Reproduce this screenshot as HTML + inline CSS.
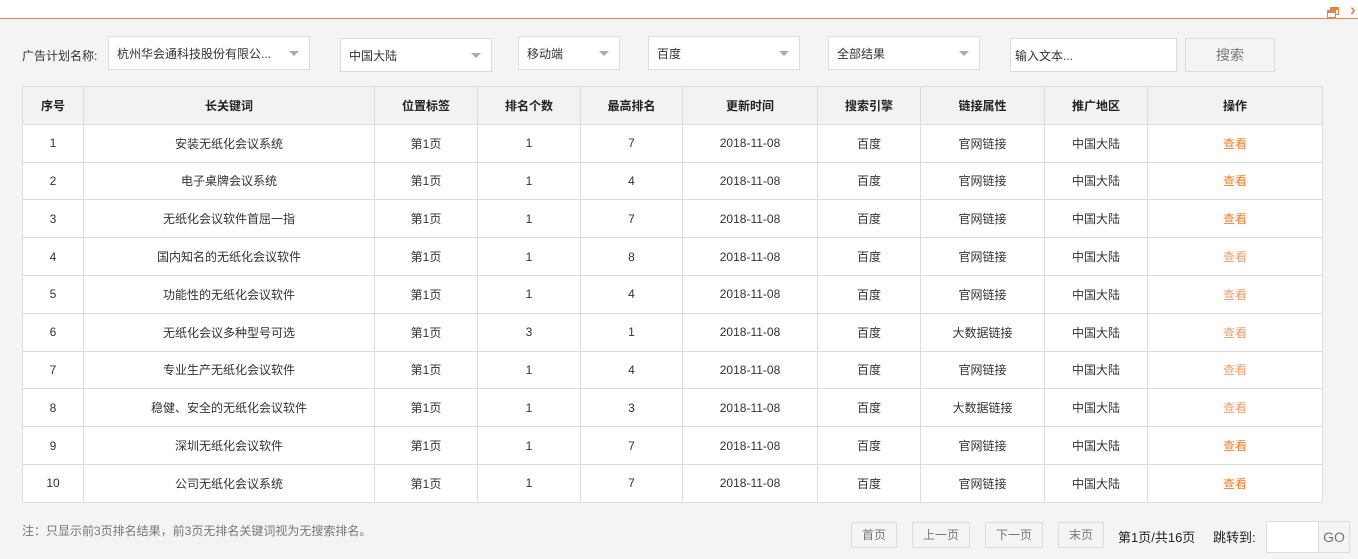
<!DOCTYPE html>
<html><head><meta charset="utf-8"><style>
*{box-sizing:border-box;margin:0;padding:0}
body{width:1358px;height:559px;background:#f4f4f4;font-family:"Liberation Sans","Noto Sans CJK SC",sans-serif;font-size:12px;color:#333;position:relative;overflow:hidden}
.top{position:absolute;left:0;top:0;width:1358px;height:19px;background:#fff;border-bottom:1px solid #e8834a}
.abs{position:absolute}
.sel,.inp{position:absolute;background:#fff;border:1px solid #ddd;height:34px;line-height:34px;padding-left:8px;color:#333}
.sel:after{content:"";position:absolute;right:10px;top:14px;border-left:5px solid transparent;border-right:5px solid transparent;border-top:5px solid #aaa}
table{position:absolute;left:22px;top:86px;border-collapse:collapse;background:#fff}
td,th{border:1px solid #ddd;text-align:center;height:37.8px;font-size:12px;color:#333;padding:0}
th{background:#f2f2f2;font-weight:bold;color:#222}
.o{color:#f07f2f}.o2{color:#e9a072}
.pb{position:absolute;top:522px;height:26px;border:1px solid #ddd;line-height:24px;text-align:center;color:#777;background:#f4f4f4}
</style></head><body>
<div class="top"></div>
<div class="abs" style="left:1330px;top:7px;width:9px;height:8px;border:1.5px solid #e8834a;border-top-width:3px"></div>
<div class="abs" style="left:1327px;top:10px;width:9px;height:8px;border:1.5px solid #e8834a;border-top-width:3px;background:#fff"></div>
<div class="abs" style="left:1350px;top:0px;color:#e8834a;font-size:17px;font-weight:bold">›</div>
<div class="abs" style="left:22px;top:47px;color:#333">广告计划名称:</div>
<div class="sel" style="left:108px;top:36px;width:202px">杭州华会通科技股份有限公...</div>
<div class="sel" style="left:340px;top:38px;width:152px">中国大陆</div>
<div class="sel" style="left:518px;top:36px;width:102px">移动端</div>
<div class="sel" style="left:648px;top:36px;width:152px">百度</div>
<div class="sel" style="left:828px;top:36px;width:152px">全部结果</div>
<div class="inp" style="left:1010px;top:38px;width:167px;padding-left:4px">输入文本...</div>
<div class="abs" style="left:1185px;top:38px;width:90px;height:34px;border:1px solid #ddd;line-height:32px;text-align:center;font-size:14px;color:#777;background:#f4f4f4">搜索</div>
<table>
<colgroup><col style="width:61px"><col style="width:291px"><col style="width:103px"><col style="width:103px"><col style="width:102px"><col style="width:135px"><col style="width:103px"><col style="width:124px"><col style="width:103px"><col style="width:175px"></colgroup>
<tr><th>序号</th><th>长关键词</th><th>位置标签</th><th>排名个数</th><th>最高排名</th><th>更新时间</th><th>搜索引擎</th><th>链接属性</th><th>推广地区</th><th>操作</th></tr>
<tr><td>1</td><td>安装无纸化会议系统</td><td>第1页</td><td>1</td><td>7</td><td>2018-11-08</td><td>百度</td><td>官网链接</td><td>中国大陆</td><td class="o">查看</td></tr>
<tr><td>2</td><td>电子桌牌会议系统</td><td>第1页</td><td>1</td><td>4</td><td>2018-11-08</td><td>百度</td><td>官网链接</td><td>中国大陆</td><td class="o">查看</td></tr>
<tr><td>3</td><td>无纸化会议软件首屈一指</td><td>第1页</td><td>1</td><td>7</td><td>2018-11-08</td><td>百度</td><td>官网链接</td><td>中国大陆</td><td class="o">查看</td></tr>
<tr><td>4</td><td>国内知名的无纸化会议软件</td><td>第1页</td><td>1</td><td>8</td><td>2018-11-08</td><td>百度</td><td>官网链接</td><td>中国大陆</td><td class="o2">查看</td></tr>
<tr><td>5</td><td>功能性的无纸化会议软件</td><td>第1页</td><td>1</td><td>4</td><td>2018-11-08</td><td>百度</td><td>官网链接</td><td>中国大陆</td><td class="o2">查看</td></tr>
<tr><td>6</td><td>无纸化会议多种型号可选</td><td>第1页</td><td>3</td><td>1</td><td>2018-11-08</td><td>百度</td><td>大数据链接</td><td>中国大陆</td><td class="o2">查看</td></tr>
<tr><td>7</td><td>专业生产无纸化会议软件</td><td>第1页</td><td>1</td><td>4</td><td>2018-11-08</td><td>百度</td><td>官网链接</td><td>中国大陆</td><td class="o2">查看</td></tr>
<tr><td>8</td><td>稳健、安全的无纸化会议软件</td><td>第1页</td><td>1</td><td>3</td><td>2018-11-08</td><td>百度</td><td>大数据链接</td><td>中国大陆</td><td class="o2">查看</td></tr>
<tr><td>9</td><td>深圳无纸化会议软件</td><td>第1页</td><td>1</td><td>7</td><td>2018-11-08</td><td>百度</td><td>官网链接</td><td>中国大陆</td><td class="o">查看</td></tr>
<tr><td>10</td><td>公司无纸化会议系统</td><td>第1页</td><td>1</td><td>7</td><td>2018-11-08</td><td>百度</td><td>官网链接</td><td>中国大陆</td><td class="o">查看</td></tr>
</table>
<div class="abs" style="left:22px;top:522px;color:#777">注：只显示前3页排名结果，前3页无排名关键词视为无搜索排名。</div>
<div class="pb" style="left:851px;width:46px">首页</div>
<div class="pb" style="left:912px;width:58px">上一页</div>
<div class="pb" style="left:985px;width:58px">下一页</div>
<div class="pb" style="left:1058px;width:46px">末页</div>
<div class="abs" style="left:1118px;top:527px;font-size:13px;color:#222">第1页/共16页</div>
<div class="abs" style="left:1213px;top:527px;font-size:13px;color:#222">跳转到:</div>
<div class="abs" style="left:1266px;top:521px;width:53px;height:32px;background:#fff;border:1px solid #ddd"></div>
<div class="abs" style="left:1318px;top:521px;width:32px;height:32px;border:1px solid #ddd;line-height:30px;text-align:center;font-size:14px;color:#777">GO</div>
</body></html>
